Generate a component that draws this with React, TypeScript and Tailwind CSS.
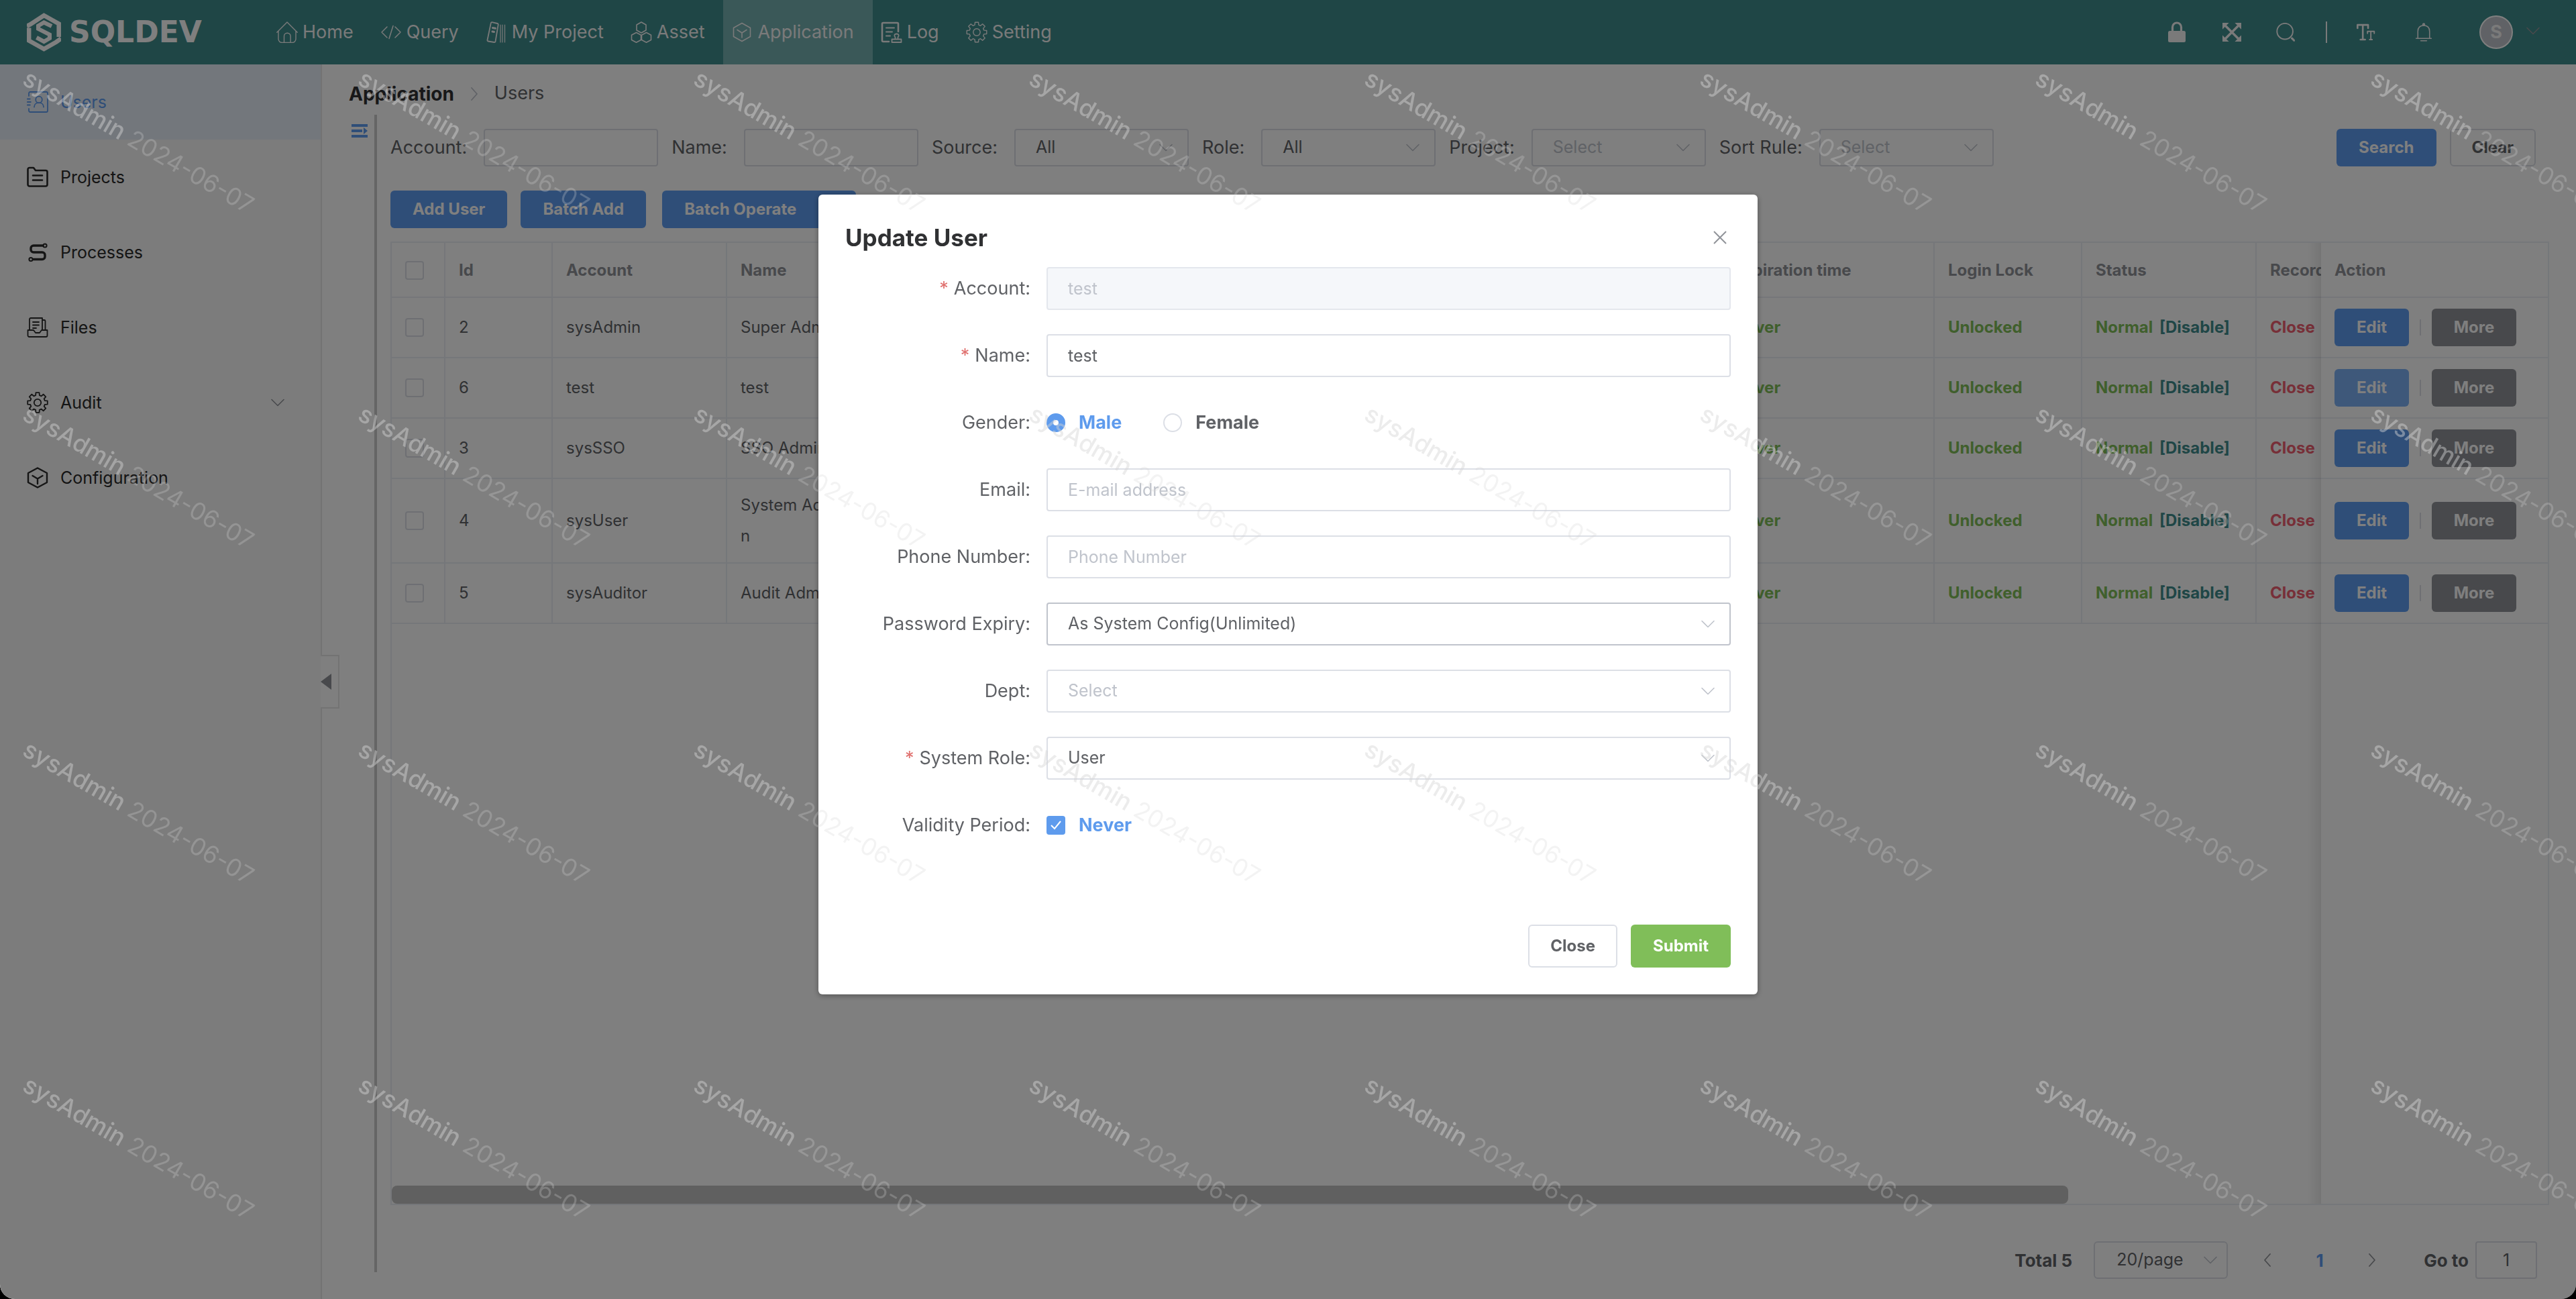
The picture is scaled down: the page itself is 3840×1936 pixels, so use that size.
import React from "react";

type IconProps = { className?: string };

const gearPoints = (() => {
  const points: string[] = [];
  for (let i = 0; i < 8; i++) {
    const base = (i * Math.PI) / 4;
    const corners: [number, number][] = [
      [-0.26, 11.2],
      [-0.17, 15],
      [0.17, 15],
      [0.26, 11.2],
    ];
    corners.forEach(([offset, radius]) => {
      points.push(
        (16 + radius * Math.sin(base + offset)).toFixed(2) + "," + (16 - radius * Math.cos(base + offset)).toFixed(2),
      );
    });
  }
  return points.join(" ");
})();

function Svg({ className, width, children }: IconProps & { width: number; children: React.ReactNode }) {
  return (
    <svg
      viewBox="0 0 32 32"
      fill="none"
      stroke="currentColor"
      strokeWidth={width}
      strokeLinejoin="round"
      strokeLinecap="round"
      aria-hidden="true"
      className={"shrink-0 " + (className ?? "size-8")}
    >
      {children}
    </svg>
  );
}

const HomeIcon = () => (
  <Svg width={1.4}>
    <path d="M.8 16.2 16 1l15.200 15.200M3 14.200V26a5.500 5.500 0 0 0 5.500 5.500h15A5.500 5.500 0 0 0 29 26V14.200M11.500 31.500V22a4.800 4.800 0 0 1 9.600 0v9.500" />
  </Svg>
);
const QueryIcon = () => (
  <Svg width={1.5}>
    <path d="m10 8-8 8 8 8M22 8l8 8-8 8M19 6.500l-6 19" />
  </Svg>
);
const ProjectIcon = () => (
  <Svg width={1.8}>
    <path d="M9.500 1.200 17.500 3a1.500 1.500 0 0 1 1.200 1.800l-4.200 25a1.500 1.500 0 0 1-1.800 1.200l-9-1.500a1.500 1.500 0 0 1-1.200-1.800L7.800 2.400a1.500 1.500 0 0 1 1.700-1.200Z" />
    <path d="m10.500 9.500 4 .8M10 15l2.500.5" strokeWidth={3} />
    <path d="M22 5v26M25 5v26M28.500 5v26" strokeWidth={1.2} />
  </Svg>
);
const AssetIcon = () => (
  <Svg width={1.6}>
    <path d="m16 1 7 4v8l-7 4-7-4V5ZM8.500 16.500l7 3.800v7.200l-7 3.800-7-3.800v-7.200ZM23.500 16.500l7 3.800v7.200l-7 3.800-7-3.800v-7.200Z" />
  </Svg>
);
const CubeIcon = ({ bold }: { bold?: boolean }) => (
  <Svg width={bold ? 2.4 : 1.6}>
    {bold ? (
      <path d="m16 1.500 14 7.500v14l-14 7.500L2 23V9ZM8.500 13l7.500 4.500 7.500-4.500M16 17.500V25" />
    ) : (
      <path d="M16 2.500 28.500 9.500v13L16 29.500 3.500 22.500v-13ZM9 12.500l7 4.500 7-4.500M16 17v7" />
    )}
  </Svg>
);
const LogIcon = () => (
  <Svg width={2.6}>
    <path d="M26 15V3.500A1.500 1.500 0 0 0 24.500 2H3.500A1.500 1.500 0 0 0 2 3.500v25A1.500 1.500 0 0 0 3.500 30H12" />
    <path d="M8 9.500h12M8 15.500h9M8 21.500h6" strokeWidth={2} />
    <path d="M16.500 31v-4.500h14V31ZM21.500 26.500v-3c-1.800-1.600-1.800-5 2-5s3.800 3.400 2 5v3" strokeWidth={1.8} />
  </Svg>
);
const GearIcon = ({ bold }: { bold?: boolean }) => (
  <Svg width={bold ? 1.8 : 1.4}>
    <polygon points={gearPoints} />
    <circle cx="16" cy="16" r="5.200" />
  </Svg>
);
const UsersIcon = () => (
  <Svg width={1.8}>
    <path d="M3 7V3a2 2 0 0 1 2-2h24a2 2 0 0 1 2 2v26a2 2 0 0 1-2 2H5a2 2 0 0 1-2-2v-3M.8 11.500h4M.8 16h5M.8 20.500h4" />
    <circle cx="18" cy="12.500" r="4.800" />
    <path d="M11 23.500c0-8.500 14-8.500 14 0" />
  </Svg>
);
const FolderIcon = () => (
  <Svg width={2.6}>
    <path d="M1.500 27V4.500A2.500 2.500 0 0 1 4 2h6l3 4h15a2.500 2.500 0 0 1 2.500 2.500V27a2.500 2.500 0 0 1-2.500 2.500H4A2.500 2.500 0 0 1 1.500 27ZM9 13.500h14M9 20.500h14" />
  </Svg>
);
const ProcessIcon = () => (
  <Svg width={3.4}>
    <path d="M24 6H10a4 4 0 0 0-4 4v2a4 4 0 0 0 4 4h13a4 4 0 0 1 4 4v2.500a4 4 0 0 1-4 4H9.500" />
    <circle cx="27" cy="6" r="2.600" strokeWidth={2} />
    <circle cx="6" cy="26.500" r="2.600" strokeWidth={2} />
  </Svg>
);
const FilesIcon = () => (
  <Svg width={1.8}>
    <path d="M4 19V3.500A2 2 0 0 1 6 2h17v17M23 5h3a1.500 1.500 0 0 1 1.500 1.500V19M9 8h9M9 12.500h9M9 17h5M1.500 20h8.500l3 4h6l3-4h8.500v8a2 2 0 0 1-2 2h-25a2 2 0 0 1-2-2Z" />
  </Svg>
);
const LockIcon = () => (
  <Svg width={3.2} className="size-8">
    <path d="M9.500 14V8.500a6.500 6.500 0 0 1 13 0V14" />
    <rect x="3" y="14" width="26" height="17" rx="2.500" fill="currentColor" stroke="none" />
  </Svg>
);
const ExpandIcon = () => (
  <Svg width={4} className="size-7">
    <path d="m6 6 20 20M26 6 6 26" />
    <path d="M0 0h11L0 11ZM32 0v11L21 0ZM0 32V21l11 11ZM32 32H21l11-11Z" fill="currentColor" stroke="none" />
  </Svg>
);
const SearchIcon = () => (
  <Svg width={2.2} className="size-7">
    <circle cx="15" cy="14.500" r="13.500" />
    <path d="m27 26.500 3.500 3.500" strokeWidth={3.6} />
  </Svg>
);
const TextSizeIcon = () => (
  <Svg width={2.6} className="size-7">
    <path d="M1.500 9V3.500h18V9M10.500 3.500v25M6.500 28.500h8" strokeWidth={3} />
    <path d="M18.500 18v-3.500h11.500V18M24.200 14.500v14M22 28.500h4.500" strokeWidth={2.2} />
  </Svg>
);
const BellIcon = () => (
  <Svg width={1.8} className="size-7">
    <path d="M3 26.500h26M6 26V14.500C6 8 10 4.500 16 4.500S26 8 26 14.500V26M16 4.500V2M11 30.500h10" />
    <circle cx="16" cy="2.800" r="1.600" />
  </Svg>
);
const Chevron = ({ className }: IconProps) => (
  <svg viewBox="0 0 20 20" fill="none" stroke="currentColor" strokeWidth="1.6" strokeLinecap="round" strokeLinejoin="round" aria-hidden="true" className={"size-5 shrink-0 " + (className ?? "")}>
    <path d="m1 5.500 9 9 9-9" />
  </svg>
);
const SideArrow = ({ className }: IconProps) => (
  <svg viewBox="0 0 20 20" fill="none" stroke="currentColor" strokeWidth="1.8" strokeLinecap="round" strokeLinejoin="round" aria-hidden="true" className={"size-5 shrink-0 " + (className ?? "")}>
    <path d="m6 1 8 9-8 9" />
  </svg>
);

function Logo() {
  return (
    <a href="#home" aria-label="SQLDEV home" className="flex w-[372px] items-center gap-3 pl-10 text-white">
      <svg viewBox="0 0 51 58" fill="none" stroke="currentColor" strokeWidth="6.500" aria-hidden="true" className="h-[58px] w-[51px] shrink-0">
        <path d="M0 20 5 17.500 25.500 4 47.700 16.500V36" strokeLinejoin="miter" />
        <path d="M3.200 22.500v19L25.500 54 44 43.500l7-5" />
        <path d="M37 20 25.500 14.500 17 19.500v4.500l17 8.500v5.500l-8.500 5L14.500 37" strokeWidth="6" />
      </svg>
      <span className="font-['DejaVu_Sans',sans-serif] text-[44px] font-bold leading-none">SQLDEV</span>
    </a>
  );
}

const navItems: { label: string; icon: React.ReactNode; active?: boolean }[] = [
  { label: "Home", icon: <HomeIcon /> },
  { label: "Query", icon: <QueryIcon /> },
  { label: "My Project", icon: <ProjectIcon /> },
  { label: "Asset", icon: <AssetIcon /> },
  { label: "Application", icon: <CubeIcon />, active: true },
  { label: "Log", icon: <LogIcon /> },
  { label: "Setting", icon: <GearIcon /> },
];

function Header() {
  return (
    <header className="flex h-24 items-stretch bg-[#3e8c8c] text-[#f4f4f4]">
      <Logo />
      <nav aria-label="Main" className="ml-7 flex items-stretch text-[27px]">
        {navItems.map((item) => (
          <a
            key={item.label}
            href="#nav"
            className={"flex items-center gap-[7px] pl-3 pr-7 " + (item.active ? "bg-[#74b0b0]" : "")}
          >
            {item.icon}
            {item.label}
          </a>
        ))}
      </nav>
      <div className="ml-auto flex items-center pr-[54px]">
        <div className="flex items-center gap-[52px]">
          <button aria-label="Lock"><LockIcon /></button>
          <button aria-label="Full screen"><ExpandIcon /></button>
          <button aria-label="Search"><SearchIcon /></button>
        </div>
        <span className="ml-[46px] mr-11 h-8 w-0.5 bg-[#f4f4f4]" />
        <div className="flex items-center gap-[58px]">
          <button aria-label="Text size"><TextSizeIcon /></button>
          <button aria-label="Notifications"><BellIcon /></button>
        </div>
        <button aria-label="Account menu" className="ml-[69px] flex items-center gap-5">
          <span className="flex size-[50px] items-center justify-center rounded-full border-2 border-white bg-[#c0c4cc] text-[27px] font-bold">
            S
          </span>
          <Chevron className="-mt-1 text-[#909399]" />
        </button>
      </div>
    </header>
  );
}

const sideItems: { label: string; icon: React.ReactNode; active?: boolean; expandable?: boolean }[] = [
  { label: "Users", icon: <UsersIcon />, active: true },
  { label: "Projects", icon: <FolderIcon /> },
  { label: "Processes", icon: <ProcessIcon /> },
  { label: "Files", icon: <FilesIcon /> },
  { label: "Audit", icon: <GearIcon bold />, expandable: true },
  { label: "Configuration", icon: <CubeIcon bold /> },
];

function Sidebar() {
  return (
    <aside className="relative w-[480px] shrink-0 border-r-2 border-[#e6e6e6] bg-[#f8f8f8]">
      <nav aria-label="Application" className="flex flex-col text-[25px] text-[#2a2a2a]">
        {sideItems.map((item) => (
          <a
            key={item.label}
            href="#section"
            className={"flex h-28 items-center gap-[18px] pl-10 pr-[54px] " + (item.active ? "bg-[#e7eff9] text-[#5e9cf0]" : "")}
          >
            {item.icon}
            <span className="pt-0.5">{item.label}</span>
            {item.expandable && <Chevron className="ml-auto text-[#909399]" />}
          </a>
        ))}
      </nav>
      <button
        aria-label="Collapse sidebar"
        className="absolute left-full top-1/2 flex h-20 w-7 -translate-y-1/2 items-center border-2 border-l-0 border-[#e6e6e6] bg-white"
      >
        <svg viewBox="0 0 16 24" fill="currentColor" aria-hidden="true" className="h-6 w-4 text-[#909399]">
          <path d="M16 0v24L0 12Z" />
        </svg>
      </button>
    </aside>
  );
}

const field = "h-14 rounded-[4px] border-2 border-[#dcdfe6] bg-white text-[25px] outline-none";

function FilterSelect({ id, label, value }: { id: string; label: string; value?: string }) {
  return (
    <div className="flex items-center gap-[25px]">
      <label htmlFor={id}>{label}</label>
      <div className="relative">
        <select
          id={id}
          className={field + " w-[260px] appearance-none px-[30px] " + (value ? "text-[#606266]" : "text-[#c0c4cc]")}
        >
          <option>{value ?? "Select"}</option>
        </select>
        <Chevron className="pointer-events-none absolute right-6 top-[18px] text-[#c0c4cc]" />
      </div>
    </div>
  );
}

function FilterInput({ id, label }: { id: string; label: string }) {
  return (
    <div className="flex items-center gap-[25px]">
      <label htmlFor={id}>{label}</label>
      <input id={id} type="text" className={field + " w-[260px] px-[30px]"} />
    </div>
  );
}

const primaryButton = "h-14 rounded-md bg-[#5e9cf0] px-[33px] text-[24px] font-bold text-white";
const plainButton = "rounded-md border-2 border-[#dcdfe6] bg-white px-[31px] text-[24px] font-bold text-[#606266]";

function Filters() {
  return (
    <form className="flex items-center justify-between pr-5">
      <div className="flex gap-5 text-[27px] text-[#606266]">
        <FilterInput id="f-account" label="Account:" />
        <FilterInput id="f-name" label="Name:" />
        <FilterSelect id="f-source" label="Source:" value="All" />
        <FilterSelect id="f-role" label="Role:" value="All" />
        <FilterSelect id="f-project" label="Project:" />
        <FilterSelect id="f-sort" label="Sort Rule:" />
      </div>
      <div className="flex gap-5">
        <button type="button" className={primaryButton}>Search</button>
        <button type="button" className={"h-14 " + plainButton}>Clear</button>
      </div>
    </form>
  );
}

const users = [
  { id: 2, account: "sysAdmin", name: "Super Admin" },
  { id: 6, account: "test", name: "test", editing: true },
  { id: 3, account: "sysSSO", name: "SSO Admin" },
  { id: 4, account: "sysUser", name: "System Admi\nn" },
  { id: 5, account: "sysAuditor", name: "Audit Admin" },
];

const cell = "border-b-2 border-r-2 border-[#ebeef5] px-5 py-4 text-left leading-[46px]";
const headCell = "border-b-2 border-r-2 border-[#ebeef5] px-5 pb-4 pt-[18px] text-left leading-[46px]";
const tick = "block size-7 appearance-none rounded-[4px] border-2 border-[#dcdfe6] bg-white";

function UserTable() {
  return (
    <div className="relative mt-5 flex-1 border-2 border-r-0 border-[#ebeef5]">
      <div className="overflow-hidden">
        <table className="w-[4140px] table-fixed border-separate border-spacing-0 text-[24px] text-[#606266]">
          <colgroup>
            <col className="w-20" />
            <col className="w-40" />
            <col className="w-[260px]" />
            <col className="w-[260px]" />
            <col className="w-[1220px]" />
            <col className="w-80" />
            <col className="w-[220px]" />
            <col className="w-[260px]" />
            <col />
            <col className="w-[340px]" />
          </colgroup>
          <thead className="text-[#909399]">
            <tr>
              <th className={headCell}><input type="checkbox" aria-label="Select all users" className={tick} /></th>
              <th className={headCell}>Id</th>
              <th className={headCell}>Account</th>
              <th className={headCell}>Name</th>
              <td className={headCell} />
              <th className={headCell}>Expiration time</th>
              <th className={headCell}>Login Lock</th>
              <th className={headCell}>Status</th>
              <th className={headCell}>Record</th>
              <th className={headCell + " sticky right-0 bg-white"}>Action</th>
            </tr>
          </thead>
          <tbody>
            {users.map((user) => (
              <tr key={user.id}>
                <td className={cell}>
                  <input type="checkbox" aria-label={"Select " + user.account} className={tick} />
                </td>
                <td className={cell}>{user.id}</td>
                <td className={cell}>{user.account}</td>
                <td className={cell + " whitespace-pre-line"}>{user.name}</td>
                <td className={cell} />
                <td className={cell + " font-bold text-[#80be59]"}>Never</td>
                <td className={cell + " font-bold text-[#80be59]"}>Unlocked</td>
                <td className={cell + " font-bold text-[#80be59]"}>
                  Normal <a href="#disable" className="ml-1 text-[#3e8c8c]">[Disable]</a>
                </td>
                <td className={cell + " font-bold text-[#ee5f70]"}>Close</td>
                <td className={cell + " sticky right-0 bg-white"}>
                  <div className="flex items-center font-bold leading-none text-white">
                    <button className={"h-14 w-[111px] rounded-md " + (user.editing ? "bg-[#7cb0f4]" : "bg-[#5e9cf0]")}>
                      Edit
                    </button>
                    <span className="mx-4 h-6 w-0.5 bg-[#dcdfe6]" />
                    <button className="h-14 w-[126px] rounded-md bg-[#909399]">More</button>
                  </div>
                </td>
              </tr>
            ))}
          </tbody>
        </table>
      </div>
      <div className="absolute inset-x-0 bottom-0 h-[27px]">
        <div className="h-full w-[77.7%] rounded-lg bg-[#c0c0c0]" />
      </div>
      <div className="pointer-events-none absolute inset-y-0 right-0 w-[340px] border-r-2 border-[#ebeef5]" />
      <div className="pointer-events-none absolute inset-y-0 right-[340px] w-5 bg-linear-to-l from-black/8 to-transparent" />
    </div>
  );
}

function Pagination() {
  return (
    <div className="mb-[30px] mt-[54px] flex items-center justify-end pr-[18px] text-[26px] text-[#606266]">
      <span className="font-bold">Total 5</span>
      <div className="relative ml-8">
        <select aria-label="Page size" className="h-14 w-[200px] appearance-none rounded-md border-2 border-[#dcdfe6] bg-white pl-8 text-[25px] outline-none">
          <option>20/page</option>
        </select>
        <Chevron className="pointer-events-none absolute right-4 top-[18px] text-[#c0c4cc]" />
      </div>
      <div className="ml-5 flex items-center font-bold">
        <button aria-label="Previous page" className="flex w-[78px] justify-center text-[#909399]">
          <SideArrow className="rotate-180" />
        </button>
        <button aria-current="page" className="w-[78px] text-[#5e9cf0]">1</button>
        <button aria-label="Next page" className="flex w-[78px] justify-center text-[#909399]">
          <SideArrow />
        </button>
      </div>
      <label htmlFor="goto" className="ml-[38px] font-bold">Go to</label>
      <input id="goto" defaultValue="1" className={field + " ml-2.5 w-[92px] text-center"} />
    </div>
  );
}

function FormRow({ label, id, required, children }: { label: string; id?: string; required?: boolean; children: React.ReactNode }) {
  return (
    <div className="flex h-16 items-center">
      <label htmlFor={id} className="mr-6 w-[276px] shrink-0 text-right">
        {required && <span className="mr-2 text-[#e0716f]">*</span>}
        {label}:
      </label>
      {children}
    </div>
  );
}

const modalField = "h-16 min-w-0 flex-1 rounded-[4px] border-2 bg-white px-[30px] text-[25px] outline-none placeholder:text-[#c0c4cc] border-[#dcdfe6]";

function ModalSelect({ id, value, placeholder, focused }: { id: string; value: string; placeholder?: boolean; focused?: boolean }) {
  return (
    <div className="relative flex-1">
      <select
        id={id}
        className={
          "h-16 w-full appearance-none rounded-[4px] border-2 bg-white px-[30px] text-[25px] outline-none " +
          (focused ? "border-[#c0c4cc] " : "border-[#dcdfe6] ") +
          (placeholder ? "text-[#c0c4cc]" : "text-[#606266]")
        }
      >
        <option>{value}</option>
      </select>
      <Chevron className="pointer-events-none absolute right-6 top-[22px] text-[#c0c4cc]" />
    </div>
  );
}

function UpdateUserDialog() {
  return (
    <div className="absolute inset-0 z-40 flex items-start justify-center bg-black/50 pt-[290px]">
      <section role="dialog" aria-modal="true" aria-labelledby="dialog-title" className="w-[1400px] rounded-md bg-white p-10 shadow-[0_2px_8px_rgba(0,0,0,0.35)]">
        <header className="flex h-12 items-center justify-between pr-1.5">
          <h2 id="dialog-title" className="text-[35px] font-bold text-[#303133]">Update User</h2>
          <button aria-label="Close dialog" className="text-[#909399]">
            <svg viewBox="0 0 20 20" stroke="currentColor" strokeWidth="2" className="size-5" aria-hidden="true">
              <path d="m1 1 18 18M19 1 1 19" />
            </svg>
          </button>
        </header>
        <form className="mt-5 flex flex-col gap-9 text-[27px] text-[#606266]">
          <FormRow label="Account" id="account" required>
            <input
              id="account"
              disabled
              defaultValue="test"
              className="h-16 min-w-0 flex-1 rounded-[4px] border-2 border-[#e4e7ed] bg-[#f5f7fa] px-[30px] text-[25px] text-[#c0c4cc]"
            />
          </FormRow>
          <FormRow label="Name" id="name" required>
            <input id="name" defaultValue="test" className={modalField} />
          </FormRow>
          <FormRow label="Gender">
            <div className="flex gap-[62px] font-bold">
              <label className="flex items-center gap-5 text-[#5e9bed]">
                <input
                  type="radio"
                  name="gender"
                  defaultChecked
                  className="size-7 appearance-none rounded-full border-[10px] border-[#5e9bed] bg-white"
                />
                Male
              </label>
              <label className="flex items-center gap-5">
                <input type="radio" name="gender" className="size-7 appearance-none rounded-full border-2 border-[#dcdfe6] bg-white" />
                Female
              </label>
            </div>
          </FormRow>
          <FormRow label="Email" id="email">
            <input id="email" type="email" placeholder="E-mail address" className={modalField} />
          </FormRow>
          <FormRow label="Phone Number" id="phone">
            <input id="phone" type="tel" placeholder="Phone Number" className={modalField} />
          </FormRow>
          <FormRow label="Password Expiry" id="expiry">
            <ModalSelect id="expiry" value="As System Config(Unlimited)" focused />
          </FormRow>
          <FormRow label="Dept" id="dept">
            <ModalSelect id="dept" value="Select" placeholder />
          </FormRow>
          <FormRow label="System Role" id="role" required>
            <ModalSelect id="role" value="User" />
          </FormRow>
          <FormRow label="Validity Period">
            <label className="flex items-center gap-5 font-bold text-[#5e9bed]">
              <span className="relative">
                <input type="checkbox" defaultChecked className="block size-7 appearance-none rounded-[4px] bg-[#5e9bed]" />
                <svg viewBox="0 0 28 28" fill="none" stroke="white" strokeWidth="2" aria-hidden="true" className="pointer-events-none absolute inset-0 size-7">
                  <path d="m7 14 5 5 9-11" />
                </svg>
              </span>
              Never
            </label>
          </FormRow>
        </form>
        <footer className="mt-[116px] flex justify-end gap-5">
          <button className={"h-16 " + plainButton}>Close</button>
          <button className="h-16 rounded-md bg-[#80be59] px-[33px] text-[24px] font-bold text-white">Submit</button>
        </footer>
      </section>
    </div>
  );
}

function Watermark() {
  return (
    <div className="pointer-events-none absolute inset-x-0 bottom-0 top-24 z-50 grid auto-rows-[500px] grid-cols-[repeat(8,500px)] overflow-hidden">
      {Array.from({ length: 32 }, (_, i) => (
        <div key={i} className="pl-12">
          <p className="w-max origin-top-left rotate-30 text-[36px] leading-10">
            <span className="font-medium text-[#d4d4d4]/45">sysAdmin</span>{" "}
            <span className="text-[#d2d2d2]/27">2024-06-07</span>
          </p>
        </div>
      ))}
    </div>
  );
}

export default function App() {
  return (
    <div className="bg-black font-[Inter,sans-serif]">
      <div className="relative flex min-h-screen flex-col overflow-hidden rounded-b-[22px] bg-white">
        <Header />
        <div className="flex flex-1">
          <Sidebar />
          <main className="flex min-w-0 flex-1 flex-col px-10">
            <nav aria-label="Breadcrumb" className="flex h-[75px] items-center pt-3 text-[27px]">
              <a href="#application" className="text-[28px] font-bold text-[#303133]">Application</a>
              <SideArrow className="mx-5 text-[#c0c4cc]" />
              <span className="text-[#606266]">Users</span>
            </nav>
            <div className="flex min-w-0 flex-1">
              <button aria-label="Toggle tree" className="mt-[14px] h-5 w-[38px] shrink-0 pl-1 text-[#5e9cf0]">
                <svg viewBox="0 0 24 20" fill="currentColor" aria-hidden="true" className="h-5 w-6">
                  <path d="M0 0h24v4H0ZM0 8h16v4H0ZM0 16h24v4H0ZM18 5l6 5-6 5Z" />
                </svg>
              </button>
              <div className="mb-10 w-1 shrink-0 bg-[#cacaca]" />
              <div className="ml-5 flex min-w-0 flex-1 flex-col pt-[21px]">
                <Filters />
                <div className="mt-9 flex gap-5">
                  <button className={primaryButton}>Add User</button>
                  <button className={primaryButton}>Batch Add</button>
                  <button className={primaryButton + " ml-1 flex items-center gap-9"}>
                    Batch Operate
                    <Chevron />
                  </button>
                </div>
                <UserTable />
                <Pagination />
              </div>
            </div>
          </main>
        </div>
        <UpdateUserDialog />
        <Watermark />
      </div>
    </div>
  );
}
